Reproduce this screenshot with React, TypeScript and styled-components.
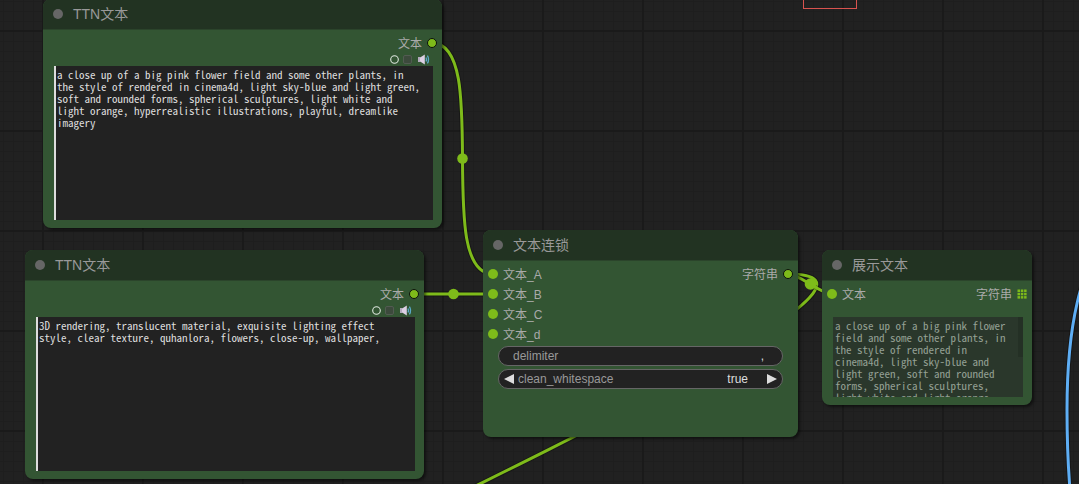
import React from "react";
import styled, { createGlobalStyle } from "styled-components";

const UI_FONT = `"Liberation Sans", "Noto Sans CJK SC", sans-serif`;
const MONO_FONT = `"Noto Sans Mono CJK SC", "Liberation Mono", monospace`;
const LINK = "#7ebb1a";

const GlobalStyle = createGlobalStyle`
  *, *::before, *::after { box-sizing: border-box; }
  body { margin: 0; background: #212121; font-family: ${UI_FONT}; }
  button, input, textarea { font: inherit; color: inherit; margin: 0; border: 0; padding: 0; background: none; }
`;

const Canvas = styled.main`
  position: relative;
  min-height: 100vh;
  overflow: hidden;
  background-color: #212121;
  background-image:
    linear-gradient(to right, #1a1a1a 2px, transparent 2px),
    linear-gradient(to bottom, #1a1a1a 2px, transparent 2px),
    linear-gradient(to right, #1e1e1e 1px, transparent 1px),
    linear-gradient(to bottom, #1e1e1e 1px, transparent 1px);
  background-size: 100px 100px, 100px 100px, 10px 10px, 10px 10px;
  background-position: 42px 30px, 42px 30px, 3px 1px, 3px 1px;
`;

const Links = styled.svg`
  position: absolute;
  inset: 0;
  width: 100%;
  height: 100%;
  fill: none;
`;

const GroupFrame = styled.div`
  position: absolute;
  left: 803px;
  top: -30px;
  width: 54px;
  height: 39px;
  border: 1px solid #d9534f;
`;

const Node = styled.section<{ $x: number; $y: number; $w: number; $h: number }>`
  position: absolute;
  left: ${(p) => p.$x}px;
  top: ${(p) => p.$y}px;
  width: ${(p) => p.$w}px;
  min-height: ${(p) => p.$h}px;
  display: flex;
  flex-direction: column;
  border-radius: 8px;
  background: #335533;
  box-shadow: 2px 2px 3px rgba(0, 0, 0, 0.5);
  overflow: hidden;
`;

const Header = styled.header`
  display: flex;
  align-items: center;
  gap: 10px;
  height: 31px;
  padding: 0 10px;
  background: #223322;
  border-bottom: 1px solid #2b442b;
`;

const CollapseDot = styled.button`
  width: 10px;
  height: 10px;
  border-radius: 50%;
  background: #666;
`;

const Title = styled.h2`
  margin: 0;
  font-size: 14px;
  font-weight: 400;
  line-height: 20px;
  color: #999;
`;

const Slots = styled.div`
  display: flex;
  justify-content: space-between;
  padding: 3px 5px 0;
`;

const SlotColumn = styled.ul`
  display: flex;
  flex-direction: column;
  margin: 0;
  padding: 0;
  list-style: none;
`;

const Slot = styled.li`
  display: flex;
  align-items: center;
  gap: 5px;
  height: 20px;
  color: #aaa;
`;

const SlotLabel = styled.span`
  padding-top: 2px;
  font-size: 12px;
  line-height: 18px;
`;

const Port = styled.span<{ $output?: boolean }>`
  width: 10px;
  height: 10px;
  border-radius: 50%;
  background: ${LINK};
  border: ${(p) => (p.$output ? "1px solid #0c120c" : "1px solid transparent")};
`;

const GridPort = styled.svg`
  width: 10px;
  height: 10px;
  fill: ${LINK};
`;

const Tools = styled.div`
  display: flex;
  justify-content: flex-end;
  align-items: center;
  gap: 4px;
  height: 13px;
  padding-right: 11px;
`;

const ToolButton = styled.button`
  display: flex;
`;

const Prompt = styled.textarea`
  display: block;
  height: 154px;
  margin: 0 9px 0 11px;
  padding: 2px 9px 2px 1px;
  border-left: 2px solid #ddd;
  background: #222;
  color: #ddd;
  font: 11px/12px ${MONO_FONT};
  resize: none;
  outline: none;
  overflow: hidden;
`;

const Preview = styled.div`
  display: flex;
  height: 80px;
  margin: 13px 9px 0 11px;
  background: #2a372b;
`;

const PreviewText = styled.textarea`
  flex: 1;
  min-width: 0;
  padding: 2px 0 0 2px;
  color: #94a094;
  font: 11px/12px ${MONO_FONT};
  resize: none;
  outline: none;
  overflow: hidden;
`;

const ScrollThumb = styled.span`
  width: 5px;
  height: 40px;
  background: #243025;
`;

const Widgets = styled.div`
  display: flex;
  flex-direction: column;
  gap: 3px;
  padding: 2px 15px 0;
`;

const Pill = styled.div<{ $inset: number }>`
  display: flex;
  align-items: center;
  gap: 4px;
  height: 20px;
  padding: 0 ${(p) => p.$inset}px;
  border: 1px solid #666;
  border-radius: 10px;
  background: #222;
  font-size: 12px;
  line-height: 18px;
  color: #999;
`;

const Value = styled.input<{ $gap: number }>`
  flex: 1;
  min-width: 0;
  padding-right: ${(p) => p.$gap}px;
  text-align: right;
  color: #ddd;
  outline: none;
`;

const Arrow = styled.button`
  display: flex;
  fill: #ddd;
`;

const PROMPT_A =
  "a close up of a big pink flower field and some other plants, in the style of rendered in cinema4d, light sky-blue and light green, soft and rounded forms, spherical sculptures, light white and light orange, hyperrealistic illustrations, playful, dreamlike imagery";
const PROMPT_B =
  "3D rendering, translucent material, exquisite lighting effect style, clear texture, quhanlora, flowers, close-up, wallpaper,";

function NodeHeader({ title }: { title: string }) {
  return (
    <Header>
      <CollapseDot type="button" aria-label="Collapse" />
      <Title>{title}</Title>
    </Header>
  );
}

function Output({ label, list }: { label: string; list?: boolean }) {
  return (
    <Slot>
      <SlotLabel>{label}</SlotLabel>
      {list ? (
        <GridPort viewBox="0 0 10 10">
          {[0.5, 3.8, 7.1].map((y) =>
            [0.5, 3.8, 7.1].map((x) => <rect key={`${x}-${y}`} x={x} y={y} width="2.5" height="2.5" />)
          )}
        </GridPort>
      ) : (
        <Port $output />
      )}
    </Slot>
  );
}

function Inputs({ labels }: { labels: string[] }) {
  return (
    <SlotColumn>
      {labels.map((label) => (
        <Slot key={label}>
          <Port />
          <SlotLabel>{label}</SlotLabel>
        </Slot>
      ))}
    </SlotColumn>
  );
}

function PromptNode({ x, y, text }: { x: number; y: number; text: string }) {
  return (
    <Node $x={x} $y={y} $w={399} $h={229}>
      <NodeHeader title="TTN文本" />
      <Slots>
        <SlotColumn />
        <SlotColumn>
          <Output label="文本" />
        </SlotColumn>
      </Slots>
      <Tools>
        <ToolButton type="button" aria-label="Record">
          <svg width="9" height="9" viewBox="0 0 9 9" fill="none" stroke="#dfe8df" strokeWidth="1.1">
            <circle cx="4.5" cy="4.5" r="3.8" />
          </svg>
        </ToolButton>
        <ToolButton type="button" aria-label="Stop">
          <svg width="9" height="9" viewBox="0 0 9 9" fill="#3c4a3c" stroke="#525c52">
            <rect x="0.5" y="0.5" width="8" height="8" rx="1.5" />
          </svg>
        </ToolButton>
        <ToolButton type="button" aria-label="Speak">
          <svg width="15" height="11" viewBox="0 0 15 11" fill="none">
            <path d="M2 3.2H4.5L8.8 0.6V10.4L4.5 7.8H2Z" fill="#dcd0e4" />
            <path d="M2 3.2H4V7.8H2Z" fill="#b5aabf" />
            <path d="M10 3.5Q11 5.5 10 7.5M11.4 1.6Q13.8 5.5 11.4 9.4" stroke="#5aa9c8" strokeWidth="1.3" />
          </svg>
        </ToolButton>
      </Tools>
      <Prompt aria-label="TTN文本" defaultValue={text} spellCheck={false} />
    </Node>
  );
}

function Wire({ d, color = LINK }: { d: string; color?: string }) {
  return (
    <>
      <path d={d} stroke="rgba(0,0,0,0.3)" strokeWidth="5" />
      <path d={d} stroke={color} strokeWidth="3" />
    </>
  );
}

export default function App() {
  return (
    <Canvas>
      <GlobalStyle />
      <Links aria-hidden="true">
        <Wire d="M432 43C492 43 433 274 493 274" />
        <Wire d="M414 294H493" />
        <Wire d="M788 274C1030 274 -342 828 -106 828" />
        <Wire d="M788 274C800 274 820 294 832 294" />
        <Wire d="M1110 240C1080 260 1067 330 1067 410C1067 440 1068 465 1070 490" color="#5eaef5" />
        <g fill={LINK}>
          <circle cx="462.5" cy="158.5" r="5.3" />
          <circle cx="453.5" cy="294" r="5.3" />
          <circle cx="810.5" cy="284" r="5.8" />
        </g>
      </Links>
      <GroupFrame />
      <PromptNode x={43} y={-1} text={PROMPT_A} />
      <PromptNode x={25} y={250} text={PROMPT_B} />
      <Node $x={483} $y={230} $w={315} $h={207}>
        <NodeHeader title="文本连锁" />
        <Slots>
          <Inputs labels={["文本_A", "文本_B", "文本_C", "文本_d"]} />
          <SlotColumn>
            <Output label="字符串" />
          </SlotColumn>
        </Slots>
        <Widgets>
          <Pill $inset={14}>
            <label htmlFor="delimiter">delimiter</label>
            <Value id="delimiter" defaultValue="," $gap={4} />
          </Pill>
          <Pill $inset={5}>
            <Arrow type="button" aria-label="Previous">
              <svg width="10" height="10" viewBox="0 0 10 10">
                <path d="M10 0V10L0 5Z" />
              </svg>
            </Arrow>
            <label htmlFor="clean">clean_whitespace</label>
            <Value id="clean" defaultValue="true" $gap={15} />
            <Arrow type="button" aria-label="Next">
              <svg width="10" height="10" viewBox="0 0 10 10">
                <path d="M0 0V10L10 5Z" />
              </svg>
            </Arrow>
          </Pill>
        </Widgets>
      </Node>
      <Node $x={822} $y={250} $w={210} $h={155}>
        <NodeHeader title="展示文本" />
        <Slots>
          <Inputs labels={["文本"]} />
          <SlotColumn>
            <Output label="字符串" list />
          </SlotColumn>
        </Slots>
        <Preview>
          <PreviewText aria-label="展示文本" readOnly value={PROMPT_A} spellCheck={false} />
          <ScrollThumb />
        </Preview>
      </Node>
    </Canvas>
  );
}
